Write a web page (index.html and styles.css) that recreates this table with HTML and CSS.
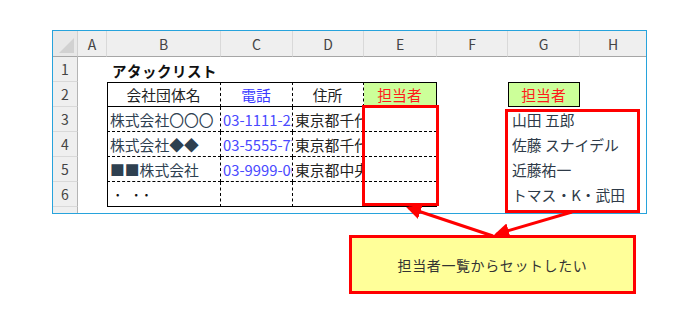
FILE: index.html
```html
<!DOCTYPE html>
<html lang="ja">
<head>
<meta charset="utf-8">
<link rel="stylesheet" href="styles.css">
</head>
<body>
<div class="page">
  <div class="sheet">
    <div class="grid">
      <div class="corner"><span class="tri"></span></div>
      <div class="ch">A</div><div class="ch">B</div><div class="ch">C</div><div class="ch">D</div>
      <div class="ch">E</div><div class="ch">F</div><div class="ch">G</div><div class="ch last">H</div>

      <div class="rh">1</div>
      <div class="c"></div><div class="c title">アタックリスト</div><div class="c"></div><div class="c"></div>
      <div class="c"></div><div class="c"></div><div class="c"></div><div class="c"></div>

      <div class="rh">2</div>
      <div class="c"></div>
      <div class="c t hd bl bt bb dr ctr">会社団体名</div>
      <div class="c t hd bt bb dr ctr blue">電話</div>
      <div class="c t hd bt bb dr ctr">住所</div>
      <div class="c t hd bt bb br ctr green red">担当者</div>
      <div class="c"></div>
      <div class="c t hd solidbox ctr green red">担当者</div>
      <div class="c"></div>

      <div class="rh">3</div>
      <div class="c"></div>
      <div class="c t bl db dr name">株式会社〇〇〇</div>
      <div class="c t db dr tel">03-1111-2222</div>
      <div class="c t db dr">東京都千代田区</div>
      <div class="c t db br"></div>
      <div class="c"></div>
      <div class="c t list">山田 五郎</div>
      <div class="c"></div>

      <div class="rh">4</div>
      <div class="c"></div>
      <div class="c t bl db dr name">株式会社◆◆</div>
      <div class="c t db dr tel">03-5555-7777</div>
      <div class="c t db dr">東京都千代田区</div>
      <div class="c t db br"></div>
      <div class="c"></div>
      <div class="c t list">佐藤 スナイデル</div>
      <div class="c"></div>

      <div class="rh">5</div>
      <div class="c"></div>
      <div class="c t bl db dr name">■■株式会社</div>
      <div class="c t db dr tel">03-9999-0000</div>
      <div class="c t db dr">東京都中央区</div>
      <div class="c t db br"></div>
      <div class="c"></div>
      <div class="c t list">近藤祐一</div>
      <div class="c"></div>

      <div class="rh">6</div>
      <div class="c"></div>
      <div class="c t bl bb dr dots"><span class="d1">･</span><span class="d2">･</span><span class="d3">･</span></div>
      <div class="c t bb dr"></div>
      <div class="c t bb dr"></div>
      <div class="c t bb br"></div>
      <div class="c"></div>
      <div class="c t list">トマス・K・武田</div>
      <div class="c"></div>

      <div class="rh short"></div>
      <div class="c short"></div><div class="c short"></div><div class="c short"></div><div class="c short"></div>
      <div class="c short"></div><div class="c short"></div><div class="c short"></div><div class="c short"></div>
    </div>
  </div>

  <div class="mark mark-e"></div>
  <div class="mark mark-g"></div>

  <svg class="arrows" width="690" height="320" viewBox="0 0 690 320">
    <defs>
      <marker id="ah" markerWidth="5" markerHeight="5" refX="4" refY="2.5" orient="auto" markerUnits="strokeWidth">
        <path d="M0,0 L5,2.5 L0,5 Z" fill="#ff0000"/>
      </marker>
    </defs>
    <line x1="493" y1="236" x2="409" y2="208" stroke="#ff0000" stroke-width="3" marker-end="url(#ah)"/>
    <line x1="572" y1="212" x2="497" y2="234" stroke="#ff0000" stroke-width="3" marker-end="url(#ah)"/>
  </svg>

  <div class="callout">担当者一覧からセットしたい</div>
</div>
</body>
</html>
```

FILE: styles.css
```css
html, body {
  margin: 0;
  padding: 0;
  background: #ffffff;
}

.page {
  position: relative;
  width: 690px;
  height: 320px;
  font-family: "Noto Sans CJK JP", "Noto Sans", sans-serif;
}

.sheet {
  position: absolute;
  left: 52px;
  top: 30px;
  border: 1px solid #27a3dc;
  background: #ffffff;
}

.grid {
  display: grid;
  grid-template-columns: 25px 29px 114px 72px 71px 73px 71px 72px 66px;
  grid-template-rows: 26px 25px 25px 25px 25px 25px 25px 6px;
}

.corner {
  position: relative;
  background: #e8e8e8;
  border-right: 1px solid #d0d0d0;
  border-bottom: 1px solid #a6a6a6;
  box-sizing: border-box;
}
.tri {
  position: absolute;
  right: 3px;
  bottom: 3px;
  width: 0;
  height: 0;
  border-left: 15px solid transparent;
  border-bottom: 15px solid #d1d1d1;
}

.ch {
  background: #efefef;
  border-right: 1px solid #d9d9d9;
  border-bottom: 1px solid #a6a6a6;
  box-sizing: border-box;
  display: flex;
  align-items: center;
  justify-content: center;
  font-size: 14px;
  color: #444444;
}
.ch.last { border-right: none; }

.rh {
  background: #efefef;
  border-right: 1px solid #b4b4b4;
  border-bottom: 1px solid #d9d9d9;
  box-sizing: border-box;
  display: flex;
  align-items: center;
  justify-content: center;
  font-size: 14px;
  color: #444444;
}
.rh.short { border-bottom: none; }

.c {
  box-sizing: border-box;
  min-width: 0;
}

.t {
  display: flex;
  align-items: center;
  padding: 0 3px 0 2px;
  font-size: 14.8px;
  color: #222222;
  white-space: nowrap;
  overflow: hidden;
}

.title {
  display: flex;
  align-items: center;
  padding-left: 5px;
  padding-top: 1px;
  font-size: 14.5px;
  font-weight: bold;
  color: #111111;
  white-space: nowrap;
  overflow: visible;
  letter-spacing: 0.5px;
}

.ctr { justify-content: center; }

.bl { border-left: 1px solid #000000; }
.bt { border-top: 1px solid #000000; }
.bb { border-bottom: 1px solid #000000; }
.br { border-right: 1px solid #000000; }
.dr { border-right: 1px dashed #000000; }
.db { border-bottom: 1px dashed #000000; }

.solidbox { border: 1px solid #000000; }

.green { background: #ccff99; }
.red { color: #ff1a1a; }
.blue { color: #3a3aff; }
.tel { color: #4a4aff; }
.name { color: #2e4050; }
.list {
  color: #2e3a48;
  padding-left: 4px;
  overflow: visible;
}
.dots { padding-left: 3px; color: #111111; }
.dots span { display: inline-block; }
.dots .d1 { margin-left: 3px; }
.dots .d2 { margin-left: 11px; }
.dots .d3 { margin-left: 3px; }

.mark {
  position: absolute;
  border: 3px solid #ff0000;
  box-sizing: border-box;
}
.mark-e {
  left: 362px;
  top: 105px;
  width: 77px;
  height: 101px;
}
.mark-g {
  left: 505px;
  top: 109px;
  width: 135px;
  height: 104px;
}

.arrows {
  position: absolute;
  left: 0;
  top: 0;
}

.callout {
  position: absolute;
  left: 349px;
  top: 235px;
  width: 287px;
  height: 59px;
  box-sizing: border-box;
  border: 3px solid #ff0000;
  background: #ffff99;
  display: flex;
  align-items: center;
  justify-content: center;
  font-size: 14px;
  letter-spacing: 0.6px;
  color: #333333;
}
```
